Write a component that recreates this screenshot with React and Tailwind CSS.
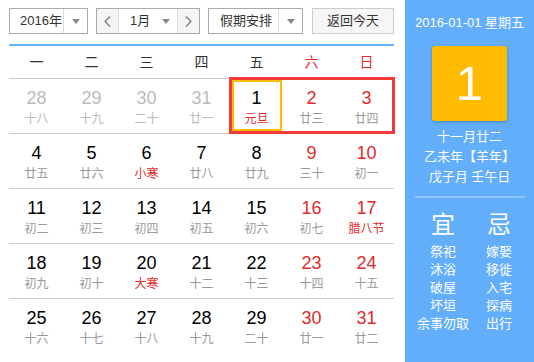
import React from 'react';

const weeks = [
  [['28', '十八', 'prev'], ['29', '十九', 'prev'], ['30', '二十', 'prev'], ['31', '廿一', 'prev'], ['1', '元旦', 'fest'], ['2', '廿三'], ['3', '廿四']],
  [['4', '廿五'], ['5', '廿六'], ['6', '小寒', 'fest'], ['7', '廿八'], ['8', '廿九'], ['9', '三十'], ['10', '初一']],
  [['11', '初二'], ['12', '初三'], ['13', '初四'], ['14', '初五'], ['15', '初六'], ['16', '初七'], ['17', '腊八节', 'fest']],
  [['18', '初九'], ['19', '初十'], ['20', '大寒', 'fest'], ['21', '十二'], ['22', '十三'], ['23', '十四'], ['24', '十五']],
  [['25', '十六'], ['26', '十七'], ['27', '十八'], ['28', '十九'], ['29', '二十'], ['30', '廿一'], ['31', '廿二']],
];

const weekdays = ['一', '二', '三', '四', '五', '六', '日'];

const yi = ['祭祀', '沐浴', '破屋', '坏垣', '余事勿取'];
const ji = ['嫁娶', '移徙', '入宅', '探病', '出行'];

// little grey dropdown triangle
const Caret = () => (
  <svg width="8" height="5" viewBox="0 0 8 5">
    <path d="M0 0 L8 0 L4 5 Z" fill="#888" />
  </svg>
);

const Chevron = ({ dir }) => (
  <svg width="7" height="11" viewBox="0 0 7 11">
    <path
      d={dir === 'left' ? 'M6 0.5 L1 5.5 L6 10.5' : 'M1 0.5 L6 5.5 L1 10.5'}
      fill="none"
      stroke="#777"
      strokeWidth="1.2"
    />
  </svg>
);

const DayCell = ({ day, lunar, kind, col }) => {
  const weekend = col >= 5;
  let numColor = weekend ? 'text-[#e32a2a]' : 'text-black';
  let lunarColor = 'text-[#999]';
  if (kind === 'prev') {
    numColor = 'text-[#bbb]';
    lunarColor = 'text-[#bbb]';
  }
  if (kind === 'fest') lunarColor = 'text-[#e32a2a]';

  return (
    <div className="flex flex-col items-center pt-[9px]">
      <span className={`text-[18px] leading-[20px] ${numColor}`}>{day}</span>
      <span className={`mt-[3px] text-[12px] leading-[16px] ${lunarColor}`}>{lunar}</span>
    </div>
  );
};

export default function App() {
  return (
    <div className="flex w-[534px] h-[362px] bg-white font-['Liberation_Sans','Noto_Sans_CJK_SC',sans-serif] overflow-hidden">
      {/* Calendar */}
      <div className="w-[405px] pl-[9px] pr-[11px]">
        {/* Toolbar */}
        <div className="flex items-center h-[26px] mt-[8px] text-[13px] text-[#333]">
          <div className="flex h-full w-[79px] border border-[#aaa]">
            <div className="flex-1 flex items-center pl-[10px]">2016年</div>
            <div className="w-[24px] flex items-center justify-center border-l border-[#ddd]">
              <Caret />
            </div>
          </div>

          <div className="flex h-full w-[104px] ml-[8px] border border-[#aaa]">
            <div className="w-[22px] flex items-center justify-center bg-[#f5f5f5] border-r border-[#ddd]">
              <Chevron dir="left" />
            </div>
            <div className="flex-1 flex items-center pl-[11px] pr-[7px] justify-between">
              <span>1月</span>
              <Caret />
            </div>
            <div className="w-[22px] flex items-center justify-center bg-[#f5f5f5] border-l border-[#ddd]">
              <Chevron dir="right" />
            </div>
          </div>

          <div className="flex h-full w-[95px] ml-[8px] border border-[#aaa]">
            <div className="flex-1 flex items-center pl-[11px]">假期安排</div>
            <div className="w-[24px] flex items-center justify-center border-l border-[#ddd]">
              <Caret />
            </div>
          </div>

          <button className="h-full w-[82px] ml-[9px] border border-[#ccc] bg-[#f6f6f6] text-[13px] text-[#333]">
            返回今天
          </button>
        </div>

        <div className="mt-[10px] h-[2px] bg-[#65b1fb]" />

        {/* Weekday header */}
        <div className="grid grid-cols-7 h-[33px] border-b border-[#ccc] text-[14px]">
          {weekdays.map((w, i) => (
            <div key={w} className={`flex items-center justify-center ${i >= 5 ? 'text-[#e32a2a]' : 'text-[#333]'}`}>
              {w}
            </div>
          ))}
        </div>

        {/* Weeks */}
        {weeks.map((week, r) => (
          <div
            key={r}
            className={`relative grid grid-cols-7 h-[55px] ${r < weeks.length - 1 ? 'border-b border-[#ccc]' : ''}`}
          >
            {week.map(([day, lunar, kind], c) => (
              <DayCell key={c} day={day} lunar={lunar} kind={kind} col={c} />
            ))}
            {r === 0 && (
              <>
                <div className="absolute left-[220px] top-[-2px] w-[166px] h-[57px] border-[3px] border-[#f23a3a]" />
                <div className="absolute left-[223px] top-[1px] w-[50px] h-[51px] border-2 border-[#ffbb00]" />
              </>
            )}
          </div>
        ))}
      </div>

      {/* Side panel */}
      <div className="w-[129px] bg-[#62aefb] flex flex-col items-center text-white text-[13px]">
        <div className="mt-[15px] leading-[16px]">2016-01-01 星期五</div>
        <div className="mt-[15px] w-[75px] h-[75px] rounded-[3px] bg-[#ffbb00] shadow-[0_1px_3px_rgba(0,0,0,0.25)] flex items-center justify-center">
          <span className="text-[49px] leading-none">1</span>
        </div>
        <div className="mt-[6px] flex flex-col items-center leading-[20px]">
          <div>十一月廿二</div>
          <div>乙未年【羊年】</div>
          <div>戊子月 壬午日</div>
        </div>
        <div className="mt-[9px] w-[110px] h-[2px] bg-[#8fc6fd]" />
        <div className="mt-[12px] flex w-full pl-[10px]">
          <div className="w-[56px] flex flex-col items-center">
            <div className="text-[24px] leading-[30px]">宜</div>
            <div className="mt-[3px] flex flex-col items-center leading-[18px]">
              {yi.map((t) => (
                <div key={t}>{t}</div>
              ))}
            </div>
          </div>
          <div className="w-[56px] flex flex-col items-center">
            <div className="text-[24px] leading-[30px]">忌</div>
            <div className="mt-[3px] flex flex-col items-center leading-[18px]">
              {ji.map((t) => (
                <div key={t}>{t}</div>
              ))}
            </div>
          </div>
        </div>
      </div>
    </div>
  );
}
